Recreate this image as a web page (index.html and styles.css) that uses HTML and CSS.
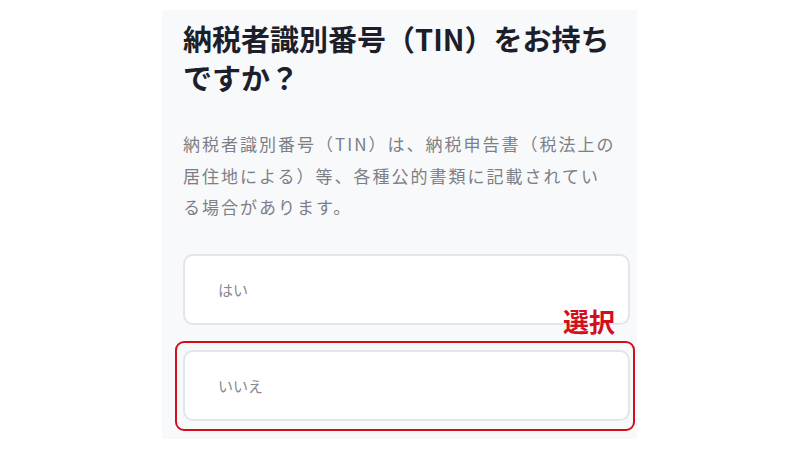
FILE: index.html
```html
<!DOCTYPE html>
<html lang="ja">
<head>
  <meta charset="UTF-8">
  <title>納税者識別番号</title>
  <link rel="stylesheet" href="styles.css">
</head>
<body>

<div class="panel">
  <h2>納税者識別番号（TIN）をお持ちですか？</h2>

  <p class="lead">納税者識別番号（TIN）は、納税申告書（税法上の居住地による）等、各種公的書類に記載されている場合があります。</p>

  <div class="options">
    <div class="option">はい</div>
    <div class="option picked">
      いいえ
      <span class="mark-label">選択</span>
      <span class="mark-box"></span>
    </div>
  </div>
</div>

</body>
</html>
```

FILE: styles.css
```css
body {
  margin: 0;
  background: #fff;
  font-family: "Noto Sans CJK JP", "Noto Sans", sans-serif;
}

.panel {
  width: 447px;
  margin: 10px 0 0 162px;
  padding: 9px 7px 18px 21px;
  background: #f8f9fb;
}

h2 {
  margin: 0;
  font-size: 29px;
  line-height: 39px;
  font-weight: bold;
  color: #1c1f2a;
}

.lead {
  margin: 31px 0 0;
  padding-right: 13px;
  font-size: 17px;
  line-height: 31.5px;
  letter-spacing: 2px;
  color: #7d7f86;
}

.options {
  display: flex;
  flex-direction: column;
  gap: 25px;
  margin-top: 31px;
}

.option {
  display: flex;
  align-items: center;
  height: 67px;
  padding-left: 33px;
  background: #fff;
  border: 2px solid #e4e5e9;
  border-radius: 10px;
  font-size: 15px;
  color: #878a92;
}

.picked {
  position: relative;
}

.mark-label {
  position: absolute;
  right: 13px;
  top: -50px;
  font-size: 26px;
  font-weight: bold;
  color: #d20f1b;
}

.mark-box {
  position: absolute;
  top: -11px;
  left: -10px;
  right: -7px;
  bottom: -12px;
  border: 2.5px solid #d20f1b;
  border-radius: 9px;
}
```
